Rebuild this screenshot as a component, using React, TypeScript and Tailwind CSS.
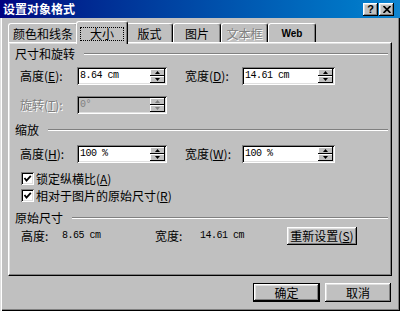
import React from "react";

const raised =
  "shadow-[inset_-1px_-1px_0_#000,inset_1px_1px_0_#fff,inset_-2px_-2px_0_#808080,inset_2px_2px_0_#dfdfdf]";
const sunken =
  "shadow-[inset_1px_1px_0_#808080,inset_-1px_-1px_0_#fff,inset_2px_2px_0_#000,inset_-2px_-2px_0_#dfdfdf]";
const mono = "font-['Liberation_Mono',monospace] text-[10px] tracking-[-0.5px]";
const dis = "text-[#808080] [text-shadow:1px_1px_0_#fff]";

function Tab({ className, children }: { className: string; children: React.ReactNode }) {
  return (
    <div
      className={`h-[19px] pt-[2px] flex items-center justify-center rounded-t-[3px] border-t border-l border-white border-r border-r-black shadow-[inset_-1px_0_0_#808080] ${className}`}
    >
      {children}
    </div>
  );
}

function SpinBtn({ up, disabled }: { up: boolean; disabled?: boolean }) {
  return (
    <div className="flex-1 bg-[#c0c0c0] flex items-center justify-center shadow-[inset_-1px_-1px_0_#000,inset_1px_1px_0_#fff]">
      <svg width="5" height="3" viewBox="0 0 5 3">
        <path
          d={up ? "M2.5 0 L5 3 L0 3 Z" : "M0 0 L5 0 L2.5 3 Z"}
          fill={disabled ? "#808080" : "#000"}
        />
      </svg>
    </div>
  );
}

function SpinBox({
  className,
  value,
  disabled,
}: {
  className: string;
  value: string;
  disabled?: boolean;
}) {
  return (
    <div
      className={`h-[18px] flex p-[2px] ${sunken} ${disabled ? "bg-[#c0c0c0]" : "bg-white"} ${className}`}
    >
      <div className={`flex-1 flex items-center pl-[1px] ${mono} ${disabled ? "text-[#808080]" : "text-black"}`}>
        {value}
      </div>
      <div className="w-[15px] flex flex-col">
        <SpinBtn up disabled={disabled} />
        <SpinBtn up={false} disabled={disabled} />
      </div>
    </div>
  );
}

function Header({ children }: { children: React.ReactNode }) {
  return (
    <div className="h-[14px] flex items-center">
      <span>{children}</span>
      <div className="flex-1 ml-[9px] h-[2px] border-t border-t-[#808080] border-b border-b-white" />
    </div>
  );
}

function Check({ children }: { children: React.ReactNode }) {
  return (
    <div className="h-[13px] flex items-center pl-[6px]">
      <div className={`w-[13px] h-[13px] bg-white ${sunken} flex items-center justify-center`}>
        <svg width="9" height="9" viewBox="0 0 9 9">
          <path d="M1.5 4 L3.5 6.5 L7.8 1.8" stroke="#000" strokeWidth="1.8" fill="none" />
        </svg>
      </div>
      <span className="ml-[2px]">{children}</span>
    </div>
  );
}

function Btn({ className, children }: { className: string; children: React.ReactNode }) {
  return (
    <div className={`bg-[#c0c0c0] flex items-center justify-center ${raised} ${className}`}>
      {children}
    </div>
  );
}

export default function App() {
  return (
    <div className="w-[400px] h-[311px] bg-[#c0c0c0] overflow-hidden text-black text-[12px] leading-[14px] font-['Noto_Sans_CJK_SC','Noto_Sans',sans-serif]">
      {/* Title bar */}
      <div className="h-[18px] flex items-center pl-[3px] pr-[6px] bg-linear-to-r from-[#000080] to-[#1084d0]">
        <span className="flex-1 text-white font-bold text-[12px] leading-[14px]">设置对象格式</span>
        <div
          className={`w-[15px] h-[13px] bg-[#c0c0c0] ${raised} flex items-center justify-center font-['Liberation_Sans',sans-serif] font-bold text-[11px] leading-none`}
        >
          ?
        </div>
        <div className={`ml-[1px] w-[15px] h-[13px] bg-[#c0c0c0] ${raised} flex items-center justify-center`}>
          <svg width="8" height="7" viewBox="0 0 8 7">
            <path d="M0.5 0 L7.5 7 M7.5 0 L0.5 7" stroke="#000" strokeWidth="1.7" />
          </svg>
        </div>
      </div>

      {/* Body */}
      <div className="h-[293px] pl-[8px] pt-[3px] shadow-[inset_1px_0_0_#dfdfdf,inset_2px_0_0_#fff,inset_-1px_-1px_0_#000,inset_-2px_-2px_0_#808080]">
        {/* Tabs */}
        <div className="flex items-end h-[21px] w-[384px]">
          <Tab className="w-[70px]">颜色和线条</Tab>
          <div className="relative z-10 -mx-[2px] -mb-[2px] h-[23px] w-[52px] bg-[#c0c0c0] rounded-t-[3px] border-t border-l border-white border-r border-r-black shadow-[inset_-1px_0_0_#808080]">
            <div className="absolute left-[3px] right-[3px] top-[5px] bottom-[3px] border border-dotted border-black flex items-center justify-center">
              大小
            </div>
          </div>
          <Tab className="w-[47px]">版式</Tab>
          <Tab className="w-[48px]">图片</Tab>
          <Tab className="w-[47px]">
            <span className={dis}>文本框</span>
          </Tab>
          <Tab className="w-[48px]">
            <span className="font-['Liberation_Sans',sans-serif] font-bold text-[10px]">Web</span>
          </Tab>
        </div>

        {/* Panel */}
        <div className="w-[384px] h-[234px] border-t border-l border-white border-r border-b border-r-black border-b-black shadow-[inset_-1px_-1px_0_#808080,inset_1px_1px_0_#dfdfdf] pl-[6px] pr-[3px] pt-[4px] flex flex-col">
          <Header>尺寸和旋转</Header>

          <div className="mt-[6px] h-[18px] flex items-center pl-[5px]">
            <span className="w-[57px]">
              高度(<span className="underline">E</span>):
            </span>
            <SpinBox className="w-[90px]" value="8.64 cm" />
            <div className="w-[18px]" />
            <span className="w-[57px]">
              宽度(<span className="underline">D</span>):
            </span>
            <SpinBox className="w-[93px]" value="14.61 cm" />
          </div>

          <div className="mt-[11px] h-[18px] flex items-center pl-[5px]">
            <span className={`w-[57px] ${dis}`}>
              旋转(<span className="underline">T</span>):
            </span>
            <SpinBox className="w-[90px]" value="0°" disabled />
          </div>

          <div className="mt-[9px]">
            <Header>缩放</Header>
          </div>

          <div className="mt-[8px] h-[18px] flex items-center pl-[5px]">
            <span className="w-[57px]">
              高度(<span className="underline">H</span>):
            </span>
            <SpinBox className="w-[90px]" value="100 %" />
            <div className="w-[18px]" />
            <span className="w-[57px]">
              宽度(<span className="underline">W</span>):
            </span>
            <SpinBox className="w-[93px]" value="100 %" />
          </div>

          <div className="mt-[9px]">
            <Check>
              锁定纵横比(<span className="underline">A</span>)
            </Check>
          </div>
          <div className="mt-[4px]">
            <Check>
              相对于图片的原始尺寸(<span className="underline">R</span>)
            </Check>
          </div>

          <div className="mt-[9px]">
            <Header>原始尺寸</Header>
          </div>

          <div className="mt-[2px] h-[18px] flex items-center pl-[6px]">
            <span className="w-[41px]">高度:</span>
            <span className={`w-[93px] ${mono}`}>8.65 cm</span>
            <span className="w-[45px]">宽度:</span>
            <span className={`w-[87px] ${mono}`}>14.61 cm</span>
            <Btn className="w-[70px] h-[18px]">
              重新设置(<span className="underline">S</span>)
            </Btn>
          </div>
        </div>

        {/* Bottom buttons */}
        <div className="w-[384px] flex justify-end gap-[5px] mt-[7px] pr-[1px]">
          <div className="w-[67px] h-[19px] border border-black flex">
            <Btn className="flex-1">确定</Btn>
          </div>
          <Btn className="w-[66px] h-[19px]">取消</Btn>
        </div>
      </div>
    </div>
  );
}
